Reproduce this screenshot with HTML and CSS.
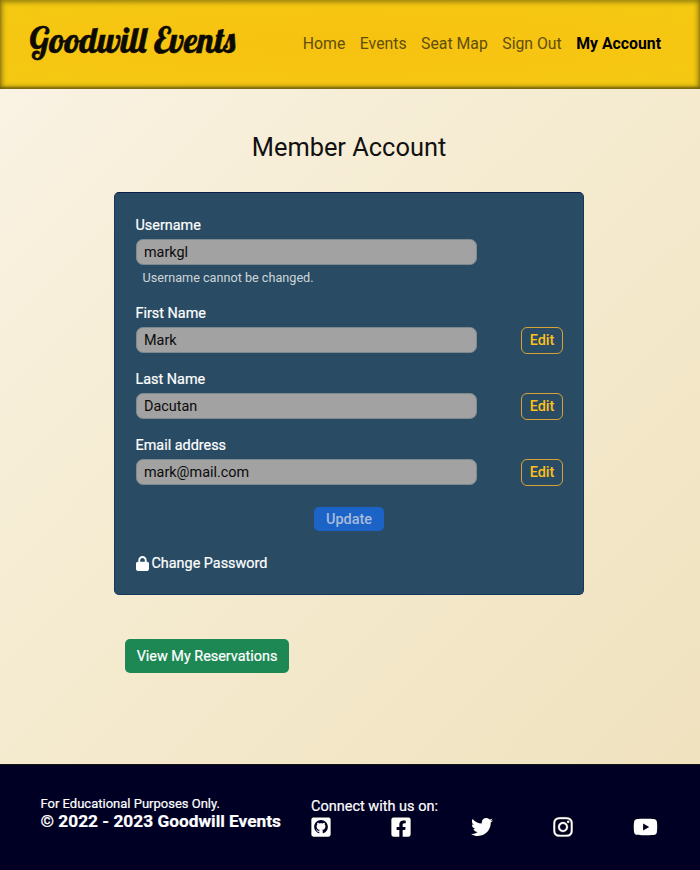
FILE: index.html
```html
<!DOCTYPE html>
<html lang="en">
<head>
<meta charset="utf-8">
<title>Goodwill Events</title>
<link rel="stylesheet" href="styles.css">
</head>
<body>
<header class="header">
  <a class="brand">Goodwill Events</a>
  <nav class="nav"><a>Home</a><a>Events</a><a>Seat Map</a><a>Sign Out</a><a class="active">My Account</a></nav>
</header>
<main class="main">
  <h1 class="title">Member Account</h1>
  <form class="card">
    <div class="field">
      <label>Username</label>
      <div class="row"><div class="input">markgl</div></div>
      <div class="hint">Username cannot be changed.</div>
    </div>
    <div class="field">
      <label>First Name</label>
      <div class="row"><div class="input">Mark</div><button class="edit" type="button">Edit</button></div>
    </div>
    <div class="field">
      <label>Last Name</label>
      <div class="row"><div class="input">Dacutan</div><button class="edit" type="button">Edit</button></div>
    </div>
    <div class="field">
      <label>Email address</label>
      <div class="row"><div class="input">mark@mail.com</div><button class="edit" type="button">Edit</button></div>
    </div>
    <button class="update" type="button">Update</button>
    <a class="password"><svg width="13" height="15" viewBox="0 0 448 512"><path d="M144 144v48H304V144c0-44.2-35.8-80-80-80s-80 35.8-80 80zM80 192V144C80 64.5 144.5 0 224 0s144 64.5 144 144v48h16c35.3 0 64 28.7 64 64V448c0 35.3-28.7 64-64 64H64c-35.3 0-64-28.7-64-64V256c0-35.3 28.7-64 64-64H80z"/></svg><span>Change Password</span></a>
  </form>
  <button class="reservations" type="button">View My Reservations</button>
</main>
<footer class="footer">
  <div class="legal"><div class="note">For Educational Purposes Only.</div><div class="copy">© 2022 - 2023 Goodwill Events</div></div>
  <div class="connect">
    <div class="connect-title">Connect with us on:</div>
    <div class="social">
      <svg width="20" height="22" viewBox="0 0 448 512"><rect y="32" width="448" height="448" rx="48"/><path class="cut" transform="translate(64 92) scale(20)" d="M8 0C3.58 0 0 3.58 0 8c0 3.54 2.29 6.53 5.47 7.59.4.07.55-.17.55-.38 0-.19-.01-.82-.01-1.49-2.01.37-2.53-.49-2.69-.94-.09-.23-.48-.94-.82-1.13-.28-.15-.68-.52-.01-.53.63-.01 1.08.58 1.23.82.72 1.21 1.87.87 2.33.66.07-.52.28-.87.51-1.07-1.78-.2-3.64-.89-3.64-3.95 0-.87.31-1.59.82-2.15-.08-.2-.36-1.02.08-2.12 0 0 .67-.21 2.2.82.64-.18 1.32-.27 2-.27s1.36.09 2 .27c1.53-1.04 2.2-.82 2.2-.82.44 1.1.16 1.92.08 2.12.51.56.82 1.27.82 2.15 0 3.07-1.87 3.75-3.65 3.95.29.25.54.73.54 1.48 0 1.07-.01 1.93-.01 2.2 0 .21.15.46.55.38A8.01 8.01 0 0 0 16 8c0-4.42-3.58-8-8-8z"/></svg>
      <svg width="20" height="22" viewBox="0 0 448 512"><path d="M400 32H48A48 48 0 0 0 0 80v352a48 48 0 0 0 48 48h137.25V327.69h-63V256h63v-54.64c0-62.15 37-96.48 93.67-96.48 27.14 0 55.52 4.84 55.52 4.84v61h-31.27c-30.81 0-40.42 19.12-40.42 38.73V256h68.78l-11 71.69h-57.78V480H400a48 48 0 0 0 48-48V80a48 48 0 0 0-48-48z"/></svg>
      <svg width="22" height="22" viewBox="0 0 512 512"><path d="M459.37 151.716c.325 4.548.325 9.097.325 13.645 0 138.72-105.583 298.558-298.558 298.558-59.452 0-114.68-17.219-161.137-47.106 8.447.974 16.568 1.299 25.34 1.299 49.055 0 94.213-16.568 130.274-44.832-46.132-.975-84.792-31.188-98.112-72.772 6.498.974 12.995 1.624 19.818 1.624 9.421 0 18.843-1.3 27.614-3.573-48.081-9.747-84.143-51.98-84.143-102.985v-1.299c13.969 7.797 30.214 12.67 47.431 13.319-28.264-18.843-46.781-51.005-46.781-87.391 0-19.492 5.197-37.36 14.294-52.954 51.655 63.675 129.3 105.258 216.365 109.807-1.624-7.797-2.599-15.918-2.599-24.04 0-57.828 46.782-104.934 104.934-104.934 30.213 0 57.502 12.67 76.67 33.137 23.715-4.548 46.456-13.32 66.599-25.34-7.798 24.366-24.366 44.833-46.132 57.827 21.117-2.273 41.584-8.122 60.426-16.243-14.292 20.791-32.161 39.308-52.628 54.253z"/></svg>
      <svg width="20" height="22" viewBox="0 0 448 512"><path stroke="#fff" stroke-width="8" d="M224.1 141c-63.6 0-114.9 51.3-114.9 114.9s51.3 114.9 114.9 114.9S339 319.5 339 255.9 287.7 141 224.1 141zm0 189.6c-41.1 0-74.7-33.5-74.7-74.7s33.5-74.7 74.7-74.7 74.7 33.5 74.7 74.7-33.6 74.7-74.7 74.7zm146.4-194.3c0 14.9-12 26.8-26.8 26.8-14.9 0-26.8-12-26.8-26.8s12-26.8 26.8-26.8 26.8 12 26.8 26.8zm76.1 27.2c-1.7-35.9-9.9-67.7-36.2-93.9-26.2-26.2-58-34.4-93.9-36.2-37-2.1-147.9-2.1-184.9 0-35.8 1.7-67.6 9.9-93.9 36.1s-34.4 58-36.2 93.9c-2.1 37-2.1 147.9 0 184.9 1.7 35.9 9.9 67.7 36.2 93.9s58 34.4 93.9 36.2c37 2.1 147.9 2.1 184.9 0 35.9-1.7 67.7-9.9 93.9-36.2 26.2-26.2 34.4-58 36.2-93.9 2.1-37 2.1-147.8 0-184.8zM398.8 388c-7.8 19.6-22.9 34.7-42.6 42.6-29.5 11.7-99.5 9-132.1 9s-102.7 2.6-132.1-9c-19.6-7.8-34.7-22.9-42.6-42.6-11.7-29.5-9-99.5-9-132.1s-2.6-102.7 9-132.1c7.8-19.6 22.9-34.7 42.6-42.6 29.5-11.7 99.5-9 132.1-9s102.7-2.6 132.1 9c19.6 7.8 34.7 22.9 42.6 42.6 11.7 29.5 9 99.5 9 132.1s2.7 102.7-9 132.1z"/></svg>
      <svg width="25" height="22" viewBox="0 0 576 512"><path d="M549.655 124.083c-6.281-23.65-24.787-42.276-48.284-48.597C458.781 64 288 64 288 64S117.22 64 74.629 75.486c-23.497 6.322-42.003 24.947-48.284 48.597-11.412 42.867-11.412 132.305-11.412 132.305s0 89.438 11.412 132.305c6.281 23.65 24.787 41.5 48.284 47.821C117.22 448 288 448 288 448s170.78 0 213.371-11.486c23.497-6.321 42.003-24.171 48.284-47.821 11.412-42.867 11.412-132.305 11.412-132.305s0-89.438-11.412-132.305zm-317.51 213.508V175.185l142.739 81.205-142.739 81.201z"/></svg>
    </div>
  </div>
</footer>
</body>
</html>
```
FILE: styles.css
```css
* { box-sizing: border-box; }
body {
  margin: 0;
  height: 870px;
  display: flex;
  flex-direction: column;
  overflow: hidden;
  font-family: Roboto, "Liberation Sans", sans-serif;
  font-size: 14.4px;
  color: #111;
  background: #f5ebd0;
}
button { font: inherit; margin: 0; padding: 0; border: 0; }
.header {
  flex: none;
  height: 89px;
  padding: 0 39px 3px 29.5px;
  display: flex;
  align-items: center;
  justify-content: space-between;
  background: radial-gradient(ellipse at center, #f7c211 0%, #f6c612 60%, #f3ca12 100%);
  box-shadow: inset 0 0 5px 2px rgba(75, 70, 10, .6), inset 0 -2px 2px rgba(75, 65, 10, .5);
}
.brand {
  font-family: Lobster, "Liberation Serif", serif;
  font-size: 34.6px;
  line-height: 46px;
  margin-top: -7px;
  white-space: nowrap;
  color: #0c0a02;
  -webkit-text-stroke: .5px #0c0a02;
}
.nav { display: flex; gap: 14.5px; padding-top: 2px; font-size: 15.8px; line-height: 20px; color: #614e0b; }
.nav .active { color: #000; font-weight: 700; }
.main {
  height: 675px;
  flex: none;
  background: linear-gradient(135deg, #faf2e3 0%, #f5ebd0 45%, #f0e2bf 100%);
}
.title { margin: 0; padding: 42px 2px 0 0; text-align: center; font-size: 25.4px; line-height: 32px; font-weight: 400; }
.card {
  width: 470px;
  height: 403px;
  margin: 29px 0 0 114px;
  padding: 23px 20px 0 20.5px;
  border: 1px solid #16385c;
  border-top-color: #0e1a48;
  border-radius: 5px;
  background: #294c64;
  color: #fff;
}
.field { margin-bottom: 17px; }
.field label { display: block; height: 23px; line-height: 20px; -webkit-text-stroke: .2px #fff; }
.row { display: flex; align-items: center; justify-content: space-between; }
.input {
  width: 341.5px;
  height: 26px;
  padding-left: 7.5px;
  border: 1px solid #7f8990;
  border-radius: 7px;
  background: #a2a2a2;
  color: #0b0b0b;
  line-height: 25px;
}
.hint { padding-left: 7px; margin-top: 4px; height: 18px; line-height: 18px; font-size: 12.65px; color: #cfd6da; }
.edit { width: 42px; height: 27px; margin-bottom: -1px; border: 1.5px solid #d7a336; border-radius: 6px; background: none; color: #ffc01a; font-weight: 500; }
.update { display: block; width: 70px; height: 24px; margin: 22px 0 0 178.5px; border-radius: 5px; background: #1c63c8; color: #a9bbdb; font-weight: 500; }
.password { display: flex; align-items: center; gap: 3px; margin-top: 22px; height: 20px; -webkit-text-stroke: .2px #fff; }
.password svg { fill: #fff; }
.reservations { display: block; width: 164px; height: 34px; margin: 44px 0 0 125px; border-radius: 5px; background: #1e8855; color: #fff; -webkit-text-stroke: .2px #fff; }
.footer {
  flex: none;
  height: 106px;
  padding: 30px 42px 0 40.5px;
  display: flex;
  border-top: 1px solid #111118;
  background: #000025;
  color: #fff;
}
.legal { width: 270.5px; white-space: nowrap; -webkit-text-stroke: .2px #fff; }
.note { font-size: 13px; line-height: 17px; }
.copy { font-size: 17.3px; line-height: 19px; font-weight: 700; }
.connect { flex: 1; }
.connect-title { padding-top: 2px; font-size: 14.5px; line-height: 19px; -webkit-text-stroke: .2px #fff; }
.social { display: flex; justify-content: space-between; height: 22px; }
.social svg { fill: #fff; filter: drop-shadow(0 0 1px #000); }
.social .cut { fill: #000025; }
```
